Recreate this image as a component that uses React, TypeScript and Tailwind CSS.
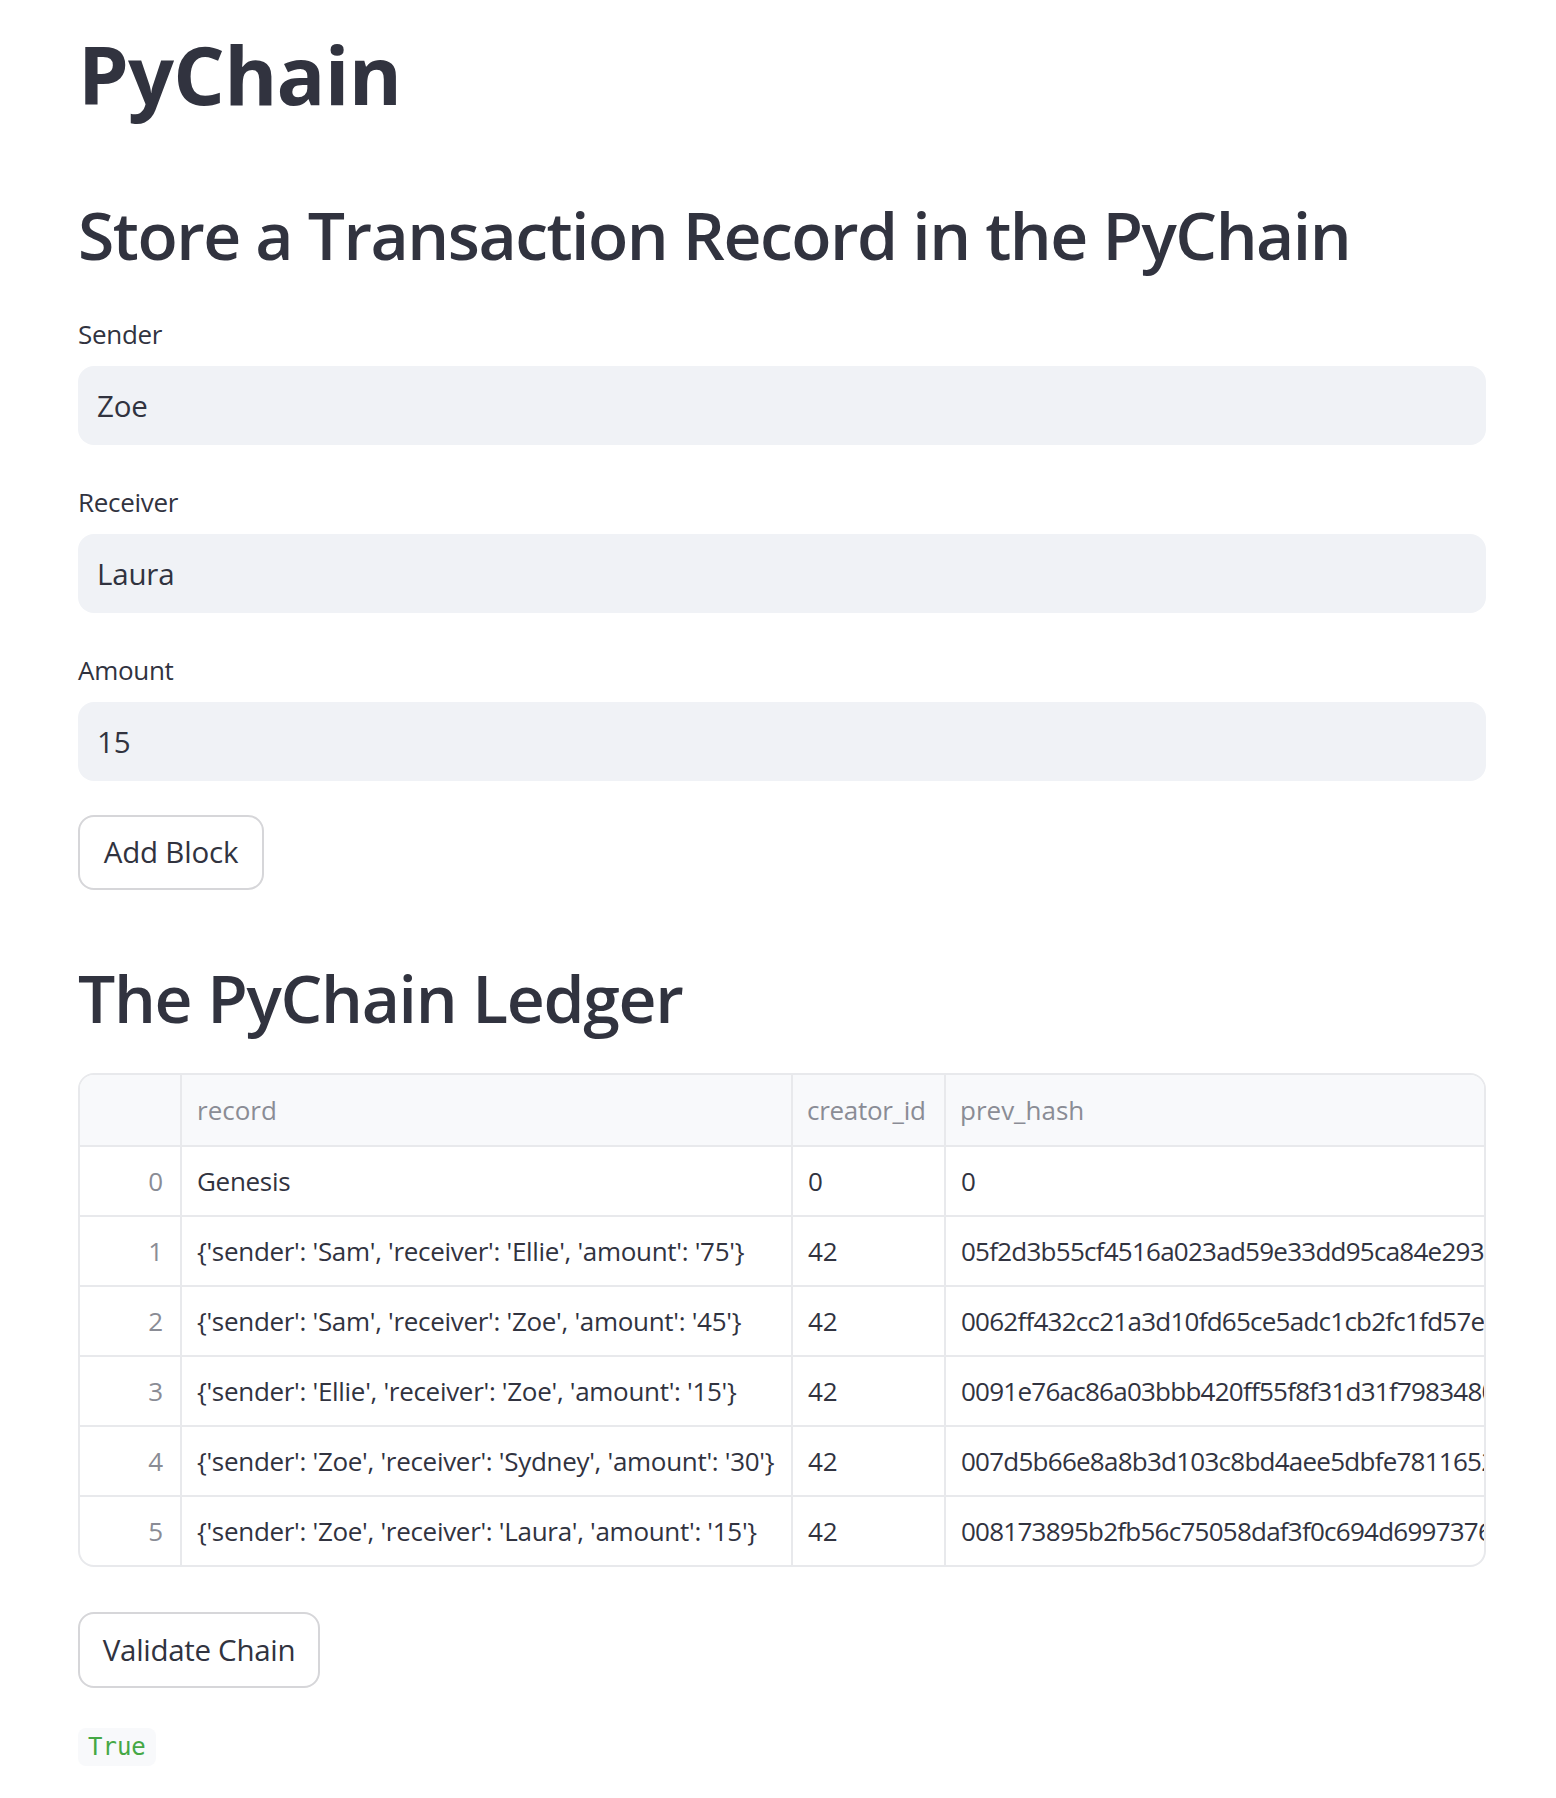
import React from "react";

const rows = [
  { i: "0", record: "Genesis", creator: "0", hash: "0" },
  {
    i: "1",
    record: "{'sender': 'Sam', 'receiver': 'Ellie', 'amount': '75'}",
    creator: "42",
    hash: "05f2d3b55cf4516a023ad59e33dd95ca84e293a7c1f0e9b2d84c6e1f3a5b7d9c",
  },
  {
    i: "2",
    record: "{'sender': 'Sam', 'receiver': 'Zoe', 'amount': '45'}",
    creator: "42",
    hash: "0062ff432cc21a3d10fd65ce5adc1cb2fc1fd57e8b4a2c9d1e0f3b6a7c5d4e21",
  },
  {
    i: "3",
    record: "{'sender': 'Ellie', 'receiver': 'Zoe', 'amount': '15'}",
    creator: "42",
    hash: "0091e76ac86a03bbb420ff55f8f31d31f79834801c2e4a6b8d0f1e3c5a7b9d2e",
  },
  {
    i: "4",
    record: "{'sender': 'Zoe', 'receiver': 'Sydney', 'amount': '30'}",
    creator: "42",
    hash: "007d5b66e8a8b3d103c8bd4aee5dbfe78116521b3c5d7e9f0a2b4c6d8e1f3a5b",
  },
  {
    i: "5",
    record: "{'sender': 'Zoe', 'receiver': 'Laura', 'amount': '15'}",
    creator: "42",
    hash: "008173895b2fb56c75058daf3f0c694d6997376e4b2a1c9d8f0e3b5a7c6d2e14",
  },
];

function Field({ label, value, top }: { label: string; value: string; top: string }) {
  return (
    <div className={top}>
      <div className="h-[32px] text-[26px] leading-[32px] tracking-[-0.3px] text-[#31333f]">{label}</div>
      <div className="mt-[16px] flex h-[79px] items-center rounded-[16px] bg-[#f0f2f6] pl-[19px] text-[29.5px] leading-[40px] tracking-[-0.2px] text-[#31333f]">
        {value}
      </div>
    </div>
  );
}

export default function App() {
  return (
    <div className="min-h-[1798px] bg-white font-['Open_Sans',sans-serif] text-[#31333f]">
      <div className="flex w-[1486px] flex-col pl-[78px]">
        <h1 className="mt-[25px] h-[97px] text-[81px] font-bold leading-[97px] tracking-[-0.8px] text-[#31333f]">
          PyChain
        </h1>
        <h2 className="mt-[72px] h-[80px] text-[66px] font-semibold leading-[80px] tracking-[-1.5px] text-[#31333f]">
          Store a Transaction Record in the PyChain
        </h2>
        <Field label="Sender" value="Zoe" top="mt-[44px]" />
        <Field label="Receiver" value="Laura" top="mt-[41px]" />
        <Field label="Amount" value="15" top="mt-[41px]" />
        <div className="mt-[34px] flex">
          <button className="flex h-[75px] w-[186px] items-center justify-center rounded-[16px] border-2 border-[#d6d6d9] bg-white text-[29.5px] tracking-[-0.2px] text-[#31333f]">
            Add Block
          </button>
        </div>
        <h2 className="mt-[67px] h-[80px] text-[66px] font-semibold leading-[80px] tracking-[-1.3px] text-[#31333f]">
          The PyChain Ledger
        </h2>
        <div className="mt-[36px] overflow-hidden rounded-[16px] border-2 border-[#e8e9ec] text-[26px]">
          <div className="flex h-[72px] border-b-2 border-[#e8e9ec] bg-[#f8f9fb] text-[#8a8c95]">
            <div className="w-[102px] shrink-0 border-r-2 border-[#e8e9ec]" />
            <div className="flex w-[611px] shrink-0 items-center border-r-2 border-[#e8e9ec] pl-[15px]">record</div>
            <div className="flex w-[153px] shrink-0 items-center border-r-2 border-[#e8e9ec] pl-[14px] tracking-[-0.3px]">creator_id</div>
            <div className="flex min-w-0 flex-1 items-center pl-[14px]">prev_hash</div>
          </div>
          {rows.map((r, idx) => (
            <div
              key={r.i}
              className={
                idx < rows.length - 1
                  ? "flex h-[70px] border-b-2 border-[#e8e9ec]"
                  : "flex h-[68px]"
              }
            >
              <div className="flex w-[102px] shrink-0 items-center justify-end border-r-2 border-[#e8e9ec] pr-[17px] text-[#8a8c95]">
                {r.i}
              </div>
              <div className="flex w-[611px] shrink-0 items-center overflow-hidden whitespace-nowrap border-r-2 border-[#e8e9ec] pl-[15px] tracking-[-0.3px] text-[#31333f]">
                {r.record}
              </div>
              <div className="flex w-[153px] shrink-0 items-center border-r-2 border-[#e8e9ec] pl-[15px] text-[#31333f]">
                {r.creator}
              </div>
              <div className="flex min-w-0 flex-1 items-center overflow-hidden whitespace-nowrap pl-[15px] tracking-[-0.75px] text-[#31333f]">
                {r.hash}
              </div>
            </div>
          ))}
        </div>
        <div className="mt-[45px] flex">
          <button className="flex h-[76px] w-[242px] items-center justify-center rounded-[16px] border-2 border-[#d6d6d9] bg-white text-[29.5px] tracking-[-0.3px] text-[#31333f]">
            Validate Chain
          </button>
        </div>
        <div className="mt-[40px] flex">
          <span className="flex h-[38px] items-center rounded-[8px] bg-[#f8f9fb] px-[10px] font-['DejaVu_Sans_Mono',monospace] text-[24px] text-[#45a845]">
            True
          </span>
        </div>
      </div>
    </div>
  );
}
